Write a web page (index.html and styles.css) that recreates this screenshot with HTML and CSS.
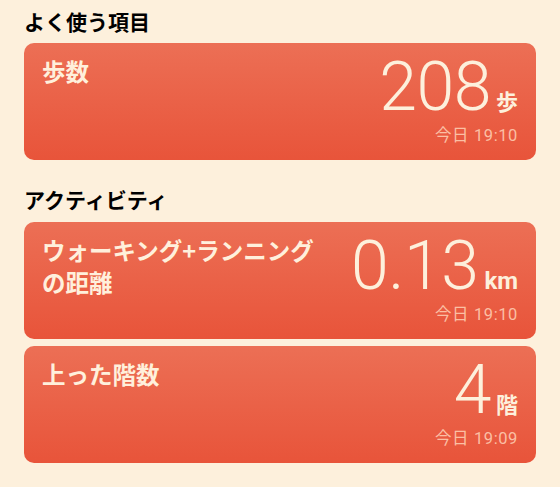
FILE: index.html
```html
<!DOCTYPE html>
<html lang="ja">
<head>
    <meta charset="UTF-8">
    <meta name="viewport" content="width=device-width, initial-scale=1.0">
    <title>概要</title>
    <link rel="stylesheet" href="styles.css">
</head>
<body>
    <h2 class="section-title">よく使う項目</h2>
    <div class="card">
        <div class="card-title">歩数</div>
        <div class="card-value">
            <div class="value-row">
                <span class="number">208</span>
                <span class="unit">歩</span>
            </div>
            <div class="time">今日 19:10</div>
        </div>
    </div>

    <h2 class="section-title second">アクティビティ</h2>
    <div class="card">
        <div class="card-title">ウォーキング+ランニング<br>の距離</div>
        <div class="card-value">
            <div class="value-row">
                <span class="number">0.13</span>
                <span class="unit latin">km</span>
            </div>
            <div class="time">今日 19:10</div>
        </div>
    </div>
    <div class="card">
        <div class="card-title">上った階数</div>
        <div class="card-value">
            <div class="value-row">
                <span class="number">4</span>
                <span class="unit">階</span>
            </div>
            <div class="time">今日 19:09</div>
        </div>
    </div>
</body>
</html>
```

FILE: styles.css
```css
body {
    margin: 0;
    padding: 0 24px;
    background-color: #fdf0dc;
    font-family: "Noto Sans CJK JP", sans-serif;
    color: #000;
}
.section-title {
    margin: 9px 0 10px;
    font-size: 21px;
    line-height: 24px;
    font-weight: 700;
}
.section-title.second {
    margin-top: 27px;
    margin-bottom: 11px;
}
.card {
    display: flex;
    justify-content: space-between;
    align-items: flex-start;
    margin-bottom: 7px;
    padding: 12px 18px 14px 18px;
    border-radius: 10px;
    background: linear-gradient(#ec6f55, #e8543a);
    color: #fdf0dc;
}
.card-title {
    font-size: 23.5px;
    line-height: 32px;
    font-weight: 700;
    color: #fff0dc;
}
.card-value {
    display: flex;
    flex-direction: column;
    align-items: flex-end;
    margin-top: 2px;
}
.value-row {
    display: flex;
    align-items: baseline;
}
.number {
    font-family: Roboto, sans-serif;
    font-weight: 300;
    font-size: 68px;
    line-height: 60px;
    letter-spacing: -0.5px;
}
.unit {
    margin-left: 5px;
    font-size: 22px;
    line-height: 22px;
    font-weight: 700;
}
.unit.latin {
    font-family: Roboto, sans-serif;
    font-size: 24px;
    margin-left: 6px;
}
.time {
    margin-top: 9px;
    font-family: Roboto, "Noto Sans CJK JP", sans-serif;
    font-size: 16.5px;
    line-height: 20px;
    color: #fbbfa4;
    letter-spacing: 0.6px;
}
```
